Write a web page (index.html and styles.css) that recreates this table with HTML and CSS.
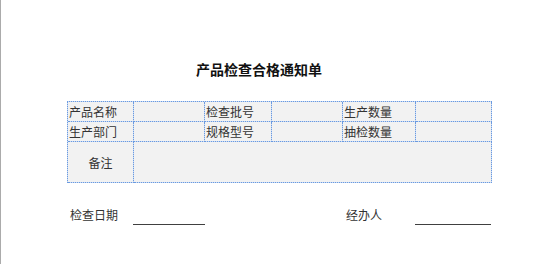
FILE: index.html
```html
<!DOCTYPE html>
<html lang="zh">
<head>
<meta charset="utf-8">
<link rel="stylesheet" href="styles.css">
</head>
<body>
<div class="page">
  <h1 class="title">产品检查合格通知单</h1>
  <div class="grid">
    <div class="cell">产品名称</div>
    <div class="cell"></div>
    <div class="cell">检查批号</div>
    <div class="cell"></div>
    <div class="cell">生产数量</div>
    <div class="cell"></div>
    <div class="cell">生产部门</div>
    <div class="cell"></div>
    <div class="cell">规格型号</div>
    <div class="cell"></div>
    <div class="cell">抽检数量</div>
    <div class="cell"></div>
    <div class="cell note">备注</div>
    <div class="cell note-body"></div>
  </div>
  <div class="footer">
    <span class="label label-date">检查日期</span>
    <span class="line line-date"></span>
    <span class="label label-agent">经办人</span>
    <span class="line line-agent"></span>
  </div>
</div>
</body>
</html>
```
FILE: styles.css
```css
html, body {
  margin: 0;
  padding: 0;
  background: #ffffff;
}
body {
  font-family: "Noto Sans CJK SC", "Noto Sans", sans-serif;
  color: #333333;
}
.page {
  width: 553px;
  height: 264px;
  border-left: 1px solid #ababab;
  box-sizing: border-box;
  padding-top: 59px;
}
.title {
  margin: 0 0 0 195px;
  font-size: 14px;
  line-height: 20px;
  font-weight: bold;
  color: #111111;
  height: 20px;
}
.grid {
  margin: 22px 0 0 66px;
  display: grid;
  grid-template-columns: 66px 71px 67px 71px 73px 76px;
  grid-template-rows: 20px 20px 41px;
  border-top: 1px dotted #6a9ae0;
  border-left: 1px dotted #6a9ae0;
  box-sizing: border-box;
  width: 425px;
  background: #c8d9f2;
}
.cell {
  background: #f2f2f2;
  background-clip: padding-box;
  border-right: 1px dotted #6a9ae0;
  border-bottom: 1px dotted #6a9ae0;
  box-sizing: border-box;
  font-size: 12px;
  line-height: 19px;
  padding-left: 1px;
  white-space: nowrap;
  overflow: hidden;
}
.note {
  display: flex;
  align-items: center;
  justify-content: center;
  padding-left: 0;
}
.note-body {
  grid-column: 2 / 7;
}
.footer {
  display: flex;
  align-items: flex-end;
  margin-top: 22px;
  padding-left: 69px;
  height: 20px;
}
.label {
  font-size: 12px;
  line-height: 16px;
  display: block;
  margin-bottom: 2px;
}
.label-date {
  width: 63px;
}
.label-agent {
  width: 69px;
}
.line {
  display: block;
  height: 0;
  border-bottom: 1px solid #404040;
}
.line-date {
  width: 72px;
  margin-right: 141px;
}
.line-agent {
  width: 76px;
}
```
